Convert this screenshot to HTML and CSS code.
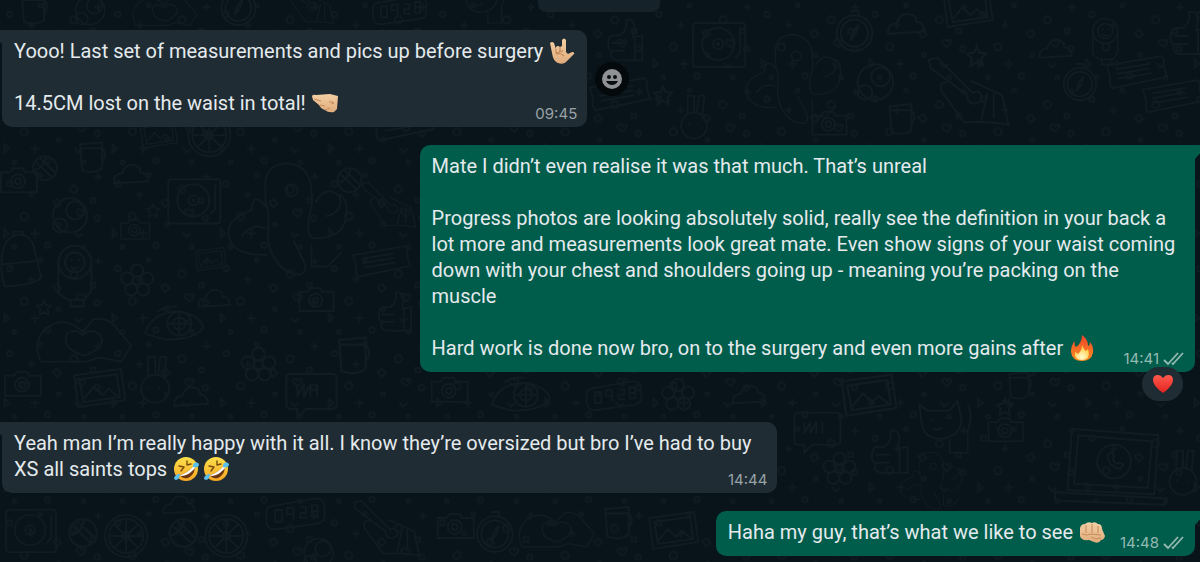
FILE: index.html
```html
<!DOCTYPE html>
<html lang="en">

<head>
    <meta charset="UTF-8">
    <meta name="viewport" content="width=device-width, initial-scale=1.0">
    <title>Chat</title>
    <link rel="stylesheet" href="styles.css">
</head>

<body>
    <!-- Shared drawings -->
    <svg class="defs" aria-hidden="true">
        <defs>
            <linearGradient id="skin" x1="0" y1="0" x2="0" y2="1">
                <stop offset="0" stop-color="#f3cfa4"/>
                <stop offset="1" stop-color="#e0ac7c"/>
            </linearGradient>
            <linearGradient id="flameFill" x1="0" y1="0" x2="0" y2="1">
                <stop offset="0" stop-color="#f0432a"/>
                <stop offset="1" stop-color="#fb8f22"/>
            </linearGradient>
            <radialGradient id="flameCore" cx="0.5" cy="0.8" r="0.7">
                <stop offset="0" stop-color="#fffbd0"/>
                <stop offset="1" stop-color="#ffc93a"/>
            </radialGradient>
            <linearGradient id="face" x1="0" y1="0" x2="0" y2="1">
                <stop offset="0" stop-color="#fde04c"/>
                <stop offset="1" stop-color="#f5a623"/>
            </linearGradient>
            <linearGradient id="heartFill" x1="0" y1="0" x2="0" y2="1">
                <stop offset="0" stop-color="#ff5a4d"/>
                <stop offset="1" stop-color="#e2231f"/>
            </linearGradient>
            <symbol id="rofl" viewBox="0 0 26 26">
                <circle cx="13" cy="13" r="12" fill="url(#face)"/>
                <path d="M6 10l5 1-3 4M14 5l0 4 4-1" fill="none" stroke="#7a4a10" stroke-width="1.4" stroke-linecap="round" stroke-linejoin="round"/>
                <path d="M7 19C12 18 18 14 21 9C23 14 20 20 15 22C11 23 8 21 7 19Z" fill="#6b3413"/>
                <path d="M7 19C12 18 18 14 21 9L22 12C18 17 13 20 8 20Z" fill="#fff"/>
                <path d="M1 23C1 20 4 18 7 18C7 21 5 24 3 24Z" fill="#5cc0ee"/>
                <path d="M20 9C21 6 24 6 26 8C26 11 23 12 20 11Z" fill="#5cc0ee"/>
            </symbol>
            <symbol id="ticks" viewBox="0 0 22 14">
                <path d="M1 8L5 12L15 1M9 11L10 12L20 1" fill="none" stroke="currentColor" stroke-width="1.8"/>
            </symbol>

            <!-- Wallpaper doodles -->
            <symbol id="star" viewBox="0 0 20 20"><path d="M10 2l2 5 6 1-4 4 1 6-5-3-5 3 1-6-4-4 6-1z"/></symbol>
            <symbol id="camera" viewBox="0 0 40 30"><path d="M2 7h9l3-4h10l2 4h12v20H2z"/><circle cx="19" cy="16" r="7"/><circle cx="19" cy="16" r="3"/></symbol>
            <symbol id="turntable" viewBox="0 0 60 50"><rect x="3" y="3" width="52" height="44" rx="3"/><circle cx="28" cy="24" r="16"/><circle cx="28" cy="24" r="5"/><circle cx="28" cy="24" r="1"/><path d="M50 8v24l-5 6"/></symbol>
            <symbol id="photo" viewBox="0 0 54 42"><path d="M3 8L48 2l4 30-45 7zM8 12l36-5 3 22-35 5z"/><path d="M12 31l10-12 8 8 6-6 10 8"/></symbol>
            <symbol id="lollipop" viewBox="0 0 40 60"><circle cx="18" cy="18" r="15"/><circle cx="18" cy="18" r="9"/><path d="M3 18v28l8 6h16l6-8V18M14 52v6h12v-7M15 15v2M22 15v2M14 22q4 3 8 0"/></symbol>
            <symbol id="cloud" viewBox="0 0 40 26"><path d="M3 22q-1-9 8-10q4-12 15-7q3 1 3 6q7 0 8 9z"/></symbol>
            <symbol id="flower" viewBox="0 0 36 36"><circle cx="18" cy="18" r="4"/><circle cx="18" cy="8" r="6"/><circle cx="28" cy="16" r="6"/><circle cx="24" cy="27" r="6"/><circle cx="12" cy="27" r="6"/><circle cx="8" cy="16" r="6"/></symbol>
            <symbol id="hands" viewBox="0 0 100 50"><path d="M8 46Q-2 26 14 12Q28 2 42 10L50 16L60 4Q76 0 86 16L98 30L88 46L66 42L54 46zM34 18Q28 34 52 40Q76 30 66 18Q56 12 50 20Q42 12 34 18z"/></symbol>
            <symbol id="ufo" viewBox="0 0 64 40"><path d="M2 30Q8 10 32 8Q56 10 60 24Q52 36 22 36z"/><circle cx="36" cy="20" r="12"/><circle cx="36" cy="20" r="6"/><path d="M36 8v24M24 20h24M14 8q8-6 20-5"/></symbol>
            <symbol id="elephant" viewBox="0 0 130 120"><path d="M44 28Q42 4 66 3Q90 6 90 32Q92 42 88 54Q84 76 92 78Q122 78 124 58Q128 40 118 34M44 28v14q4 8 3 22q-2 18 4 30q10 20 28 20q8-4 3-14l-10-20M44 46Q32 30 30 50Q2 60 8 78Q14 96 46 94M94 42q10-18 24-6q4 16-14 20M90 84v22h16l14-14M20 76q10-14 24-8"/><circle cx="70" cy="30" r="6"/></symbol>
            <symbol id="laptop" viewBox="0 0 110 76"><path d="M18 2L100 8L96 64L14 60zM24 8L94 14L90 58L20 54zM2 62L108 68L106 74L2 70z"/><circle cx="58" cy="33" r="16"/><path d="M52 26q0 12 12 14l3-4-4-2-2 1q-4-2-4-5l1-2-2-4z"/></symbol>
            <symbol id="ticket" viewBox="0 0 70 38"><path d="M2 12L60 2q4 4 2 10l4 12L8 36q-5-5-2-10zM12 16l36-6M12 21l36-6M14 26l36-6"/></symbol>
            <symbol id="clock" viewBox="0 0 40 44"><circle cx="20" cy="24" r="17"/><circle cx="20" cy="24" r="13"/><path d="M16 3h8v4M24 16l-3 9-5 6 3-9z"/></symbol>
            <symbol id="cat" viewBox="0 0 60 60"><path d="M4 8l8 6h22l8-10 4 20q-2 16-20 18Q8 42 6 26zM34 42v14h18V34q6-16 0-26M16 22v2M30 20v2M18 32q4 2 9-1"/></symbol>
            <symbol id="bubble" viewBox="0 0 50 44"><path d="M6 3h38q4 0 4 4v24q0 4-4 4H20l-8 8v-8H6q-4 0-4-4V7q0-4 4-4zM12 12v12l6-12v12l6-12v12M30 12v12"/></symbol>
            <symbol id="ball" viewBox="0 0 28 28"><circle cx="14" cy="14" r="12"/><path d="M5 8l16 15M9 4l16 15M3 16q10-2 12-14"/></symbol>
            <symbol id="burger" viewBox="0 0 46 40"><circle cx="22" cy="19" r="17"/><circle cx="27" cy="14" r="9"/><circle cx="12" cy="29" r="7"/></symbol>
            <symbol id="wheel" viewBox="0 0 46 46"><circle cx="23" cy="23" r="21"/><circle cx="23" cy="23" r="17"/><circle cx="23" cy="23" r="4"/><path d="M23 6v34M6 23h34M11 11l24 24M35 11L11 35"/></symbol>
            <symbol id="digital" viewBox="0 0 66 36"><path d="M8 10L54 2q8 0 9 8v12q-2 5-8 6L12 34q-8 0-9-8V16q1-5 5-6z"/><path d="M12 14h7v12h-7zM24 12h7v6h-7zM31 18v6M38 11h6v6h-6v5h7M50 9h6v12h-6zM50 15h6"/></symbol>
            <symbol id="guitar" viewBox="0 0 86 70"><path d="M4 4l8-2 34 34q6-4 8 2q2 6-6 8q-8 0-7-8L6 12zM22 26q-8-2-6 8l22 30q20-2 42 2L74 38 44 24M60 36l-6 26M66 36v24"/></symbol>
            <symbol id="bunny" viewBox="0 0 34 52"><circle cx="18" cy="36" r="14"/><path d="M11 24V4h7v18M21 22l2-18h6l-2 22M12 34v2M22 34v2"/></symbol>
            <symbol id="mug" viewBox="0 0 30 34"><path d="M3 4l22-2v26q-8 6-20 2zM25 8q6 6 0 14M4 8h20"/></symbol>
            <symbol id="bag" viewBox="0 0 46 60"><path d="M4 20Q8 4 22 4Q34 6 36 22l6 24q-2 8-36 10Q0 40 4 20zM2 34l40-4M14 6V1h10v4"/></symbol>
            <symbol id="thumb" viewBox="0 0 44 50"><path d="M4 24q0-6 6-6h6Q24 12 22 2q8-2 9 8l-2 10 10-2v26H12q-8-2-5-9q-5-4-3-11zM7 26h14M7 34h14M31 20v24"/></symbol>
            <pattern id="bits" width="120" height="94" patternUnits="userSpaceOnUse" patternTransform="scale(0.9)">
                <g fill="none" stroke="#0f1b21" stroke-width="2">
                    <circle cx="12" cy="16" r="3"/><circle cx="46" cy="6" r="2"/><circle cx="83" cy="22" r="4"/>
                    <circle cx="28" cy="52" r="4"/><circle cx="66" cy="61" r="2"/><circle cx="109" cy="54" r="3"/>
                    <circle cx="17" cy="86" r="2"/><circle cx="54" cy="84" r="3"/><circle cx="94" cy="86" r="2"/>
                    <path d="M60 36l5-3 4 5-5 4zM102 32h5v5h-5zM6 66l5 5-5 4zM84 70l4 5 5-4M92 46q-3-5-6 0q1 4 6 6q5-4 4-7q-2-2-4 1z"/>
                    <path d="M40 66v10M35 71h10M36 24v8M32 28h8M110 4v8M106 8h8"/>
                </g>
            </pattern>
        </defs>
    </svg>

    <main class="chat">
        <svg class="wallpaper" viewBox="0 0 1200 562" preserveAspectRatio="xMidYMid slice" aria-hidden="true">
            <rect width="1200" height="562" fill="url(#bits)"/>
            <g fill="none" stroke="#101c22" stroke-width="2">
                <use href="#bag" x="0" y="230" width="46" height="60"/>
                <use href="#camera" x="0" y="165" width="40" height="30"/>
                <use href="#ball" x="32" y="152" width="28" height="32"/>
                <use href="#mug" x="78" y="140" width="30" height="34"/>
                <use href="#cloud" x="112" y="160" width="40" height="28"/>
                <use href="#turntable" x="166" y="176" width="60" height="50"/>
                <use href="#burger" x="45" y="196" width="54" height="40"/>
                <use href="#lollipop" x="56" y="240" width="44" height="70"/>
                <use href="#flower" x="120" y="262" width="36" height="36"/>
                <use href="#elephant" x="222" y="160" width="130" height="120"/>
                <use href="#ball" x="336" y="166" width="28" height="28"/>
                <use href="#ufo" x="144" y="302" width="64" height="42"/>
                <use href="#hands" x="34" y="315" width="100" height="50"/>
                <use href="#photo" x="72" y="366" width="56" height="44"/>
                <use href="#bunny" x="138" y="352" width="34" height="52"/>
                <use href="#cloud" x="172" y="382" width="40" height="28"/>
                <use href="#flower" x="240" y="345" width="38" height="38"/>
                <use href="#camera" x="298" y="284" width="38" height="30"/>
                <use href="#mug" x="336" y="334" width="36" height="42"/>
                <use href="#bubble" x="282" y="370" width="60" height="48"/>
                <use href="#ticket" x="346" y="244" width="74" height="34"/>
                <use href="#photo" x="194" y="244" width="34" height="30"/>
                <use href="#camera" x="4" y="368" width="40" height="30"/>
                <use href="#guitar" x="360" y="180" width="60" height="50"/>
                <use href="#thumb" x="376" y="290" width="40" height="46"/>
                <use href="#star" x="146" y="202" width="16" height="16"/>
                <use href="#star" x="36" y="298" width="18" height="18"/>
                <use href="#camera" x="120" y="216" width="32" height="26"/>
                <use href="#cloud" x="196" y="286" width="38" height="24"/>
                <use href="#hands" x="130" y="-6" width="70" height="34"/>
                <use href="#clock" x="218" y="-16" width="42" height="44"/>
                <use href="#burger" x="70" y="-6" width="44" height="34"/>
                <use href="#mug" x="20" y="-8" width="30" height="34"/>
                <use href="#guitar" x="280" y="-20" width="60" height="46"/>
                <use href="#digital" x="370" y="-6" width="60" height="32"/>
                <use href="#cat" x="460" y="-20" width="50" height="46"/>
                <use href="#thumb" x="604" y="18" width="44" height="48"/>
                <use href="#ticket" x="588" y="76" width="66" height="36"/>
                <use href="#star" x="652" y="84" width="22" height="22"/>
                <use href="#turntable" x="690" y="20" width="60" height="50"/>
                <use href="#elephant" x="740" y="30" width="104" height="100"/>
                <use href="#clock" x="832" y="8" width="44" height="46"/>
                <use href="#burger" x="852" y="62" width="48" height="42"/>
                <use href="#cloud" x="884" y="10" width="44" height="28"/>
                <use href="#photo" x="940" y="-12" width="54" height="42"/>
                <use href="#camera" x="810" y="108" width="38" height="30"/>
                <use href="#mug" x="884" y="102" width="34" height="34"/>
                <use href="#guitar" x="924" y="50" width="90" height="84"/>
                <use href="#star" x="964" y="44" width="24" height="24"/>
                <use href="#cloud" x="1036" y="34" width="38" height="30"/>
                <use href="#clock" x="1060" y="60" width="38" height="44"/>
                <use href="#lollipop" x="1086" y="16" width="40" height="50"/>
                <use href="#ticket" x="1104" y="54" width="66" height="36"/>
                <use href="#ticket" x="1140" y="78" width="66" height="36"/>
                <use href="#thumb" x="1166" y="10" width="44" height="50"/>
                <use href="#ticket" x="370" y="106" width="70" height="36"/>
                <use href="#wheel" x="180" y="112" width="60" height="46"/>
                <use href="#photo" x="136" y="118" width="46" height="32"/>
                <use href="#bunny" x="676" y="92" width="34" height="48"/>
                <use href="#camera" x="430" y="374" width="40" height="30"/>
                <use href="#ufo" x="490" y="374" width="64" height="40"/>
                <use href="#digital" x="584" y="378" width="60" height="34"/>
                <use href="#flower" x="660" y="376" width="36" height="36"/>
                <use href="#cloud" x="730" y="380" width="38" height="28"/>
                <use href="#photo" x="838" y="370" width="60" height="50"/>
                <use href="#bubble" x="792" y="408" width="50" height="46"/>
                <use href="#cat" x="912" y="396" width="66" height="60"/>
                <use href="#camera" x="986" y="414" width="38" height="30"/>
                <use href="#mug" x="1004" y="370" width="30" height="30"/>
                <use href="#laptop" x="1050" y="426" width="120" height="80"/>
                <use href="#thumb" x="868" y="428" width="44" height="50"/>
                <use href="#elephant" x="890" y="450" width="80" height="62"/>
                <use href="#flower" x="820" y="450" width="38" height="36"/>
                <use href="#bunny" x="1164" y="446" width="34" height="50"/>
                <use href="#star" x="994" y="396" width="20" height="20"/>
                <use href="#wheel" x="104" y="512" width="46" height="46"/>
                <use href="#ball" x="68" y="516" width="32" height="32"/>
                <use href="#wheel" x="204" y="512" width="46" height="46"/>
                <use href="#ball" x="168" y="516" width="32" height="32"/>
                <use href="#digital" x="264" y="494" width="64" height="38"/>
                <use href="#cloud" x="160" y="492" width="40" height="24"/>
                <use href="#burger" x="300" y="536" width="40" height="34"/>
                <use href="#turntable" x="4" y="506" width="58" height="48"/>
                <use href="#guitar" x="350" y="498" width="76" height="60"/>
                <use href="#camera" x="436" y="510" width="40" height="30"/>
                <use href="#clock" x="474" y="508" width="42" height="46"/>
                <use href="#hands" x="516" y="506" width="80" height="46"/>
                <use href="#mug" x="602" y="504" width="32" height="36"/>
                <use href="#photo" x="646" y="508" width="54" height="44"/>
            </g>
        </svg>

        <div class="date-chip"></div>

        <div class="row incoming">
            <div class="bubble">
                <p>Yooo! Last set of measurements and pics up before surgery <svg class="emoji" viewBox="0 0 26 26" role="img" aria-label="Love-you gesture"><path d="M1 5Q3 3 5 5L7 11V9Q9 7 11 9L13 8V2Q15-1 17 2V14L19 16L23 14Q26 14 25 16L17 24Q14 27 9 25Q4 23 3 15Z" fill="url(#skin)"/><path d="M7 11V15Q9 16 11 13V9M11 13Q13 15 14 12M7 16Q12 14 15 18" fill="none" stroke="#b97c4e" stroke-width="1"/></svg></p>
                <p>14.5CM lost on the waist in total! <svg class="emoji" viewBox="0 0 26 26" role="img" aria-label="Left-facing fist"><path d="M0 6Q1 4 4 5L18 4Q22 5 26 6L25 19L22 22Q16 23 13 20Q9 19 7 15L1 10Z" fill="url(#skin)"/><path d="M2 9L9 11M8 15L13 16M13 20L18 18M17 12Q20 11 22 13L19 14" fill="none" stroke="#c48a58" stroke-width="1"/></svg></p>
                <time class="meta">09:45</time>
            </div>
            <button class="react" type="button" aria-label="React">
                <svg viewBox="0 0 20 20"><circle cx="10" cy="10" r="10" fill="#8f9192"/><circle cx="7" cy="8" r="2" fill="#0a0e10"/><circle cx="13" cy="8" r="2" fill="#0a0e10"/><path d="M4 12H16Q14 16 10 16Q6 16 4 12Z" fill="#0a0e10"/></svg>
            </button>
        </div>

        <div class="row outgoing reacted">
            <div class="bubble">
                <p>Mate I didn’t even realise it was that much. That’s unreal</p>
                <p>Progress photos are looking absolutely solid, really see the definition in your back a lot more and measurements look great mate. Even show signs of your waist coming down with your chest and shoulders going up - meaning you’re packing on the muscle</p>
                <p>Hard work is done now bro, on to the surgery and even more gains after <svg class="emoji" viewBox="0 0 26 26" role="img" aria-label="Fire"><path d="M13 0Q19 4 19 11Q21 10 21 7Q25 12 24 18Q22 26 13 26Q3 26 2 17Q2 10 6 6Q5 10 7 12Q13 8 13 0Z" fill="url(#flameFill)"/><path d="M13 10Q15 15 17 16L19 14Q22 25 13 25Q5 25 6 17L9 19Q13 16 13 10Z" fill="url(#flameCore)"/></svg></p>
                <span class="meta"><time>14:41</time><svg class="ticks" role="img" aria-label="Delivered"><use href="#ticks"/></svg></span>
                <button class="reaction" type="button" aria-label="Heart reaction">
                    <svg viewBox="0 0 20 20"><path d="M10 19Q0 12 0 6Q0 1 5 1Q8 1 10 4Q12 1 15 1Q20 1 20 6Q20 12 10 19Z" fill="url(#heartFill)"/></svg>
                </button>
            </div>
        </div>

        <div class="row incoming">
            <div class="bubble">
                <p>Yeah man I’m really happy with it all. I know they’re oversized but bro I’ve had to buy XS all saints tops <svg class="emoji" role="img" aria-label="Rolling on the floor laughing"><use href="#rofl"/></svg><svg class="emoji" role="img" aria-label="Rolling on the floor laughing"><use href="#rofl"/></svg></p>
                <time class="meta">14:44</time>
            </div>
        </div>

        <div class="row outgoing">
            <div class="bubble short">
                <p>Haha my guy, that’s what we like to see <svg class="emoji" viewBox="0 0 26 26" role="img" aria-label="Oncoming fist"><path d="M1 9Q2 5 6 5Q9 2 13 4Q16 2 19 5Q23 5 23 10L26 17Q25 21 22 21Q20 25 15 23L10 21Q2 22 1 17Z" fill="url(#skin)"/><path d="M7 6V14M13 5V14M19 7V14M3 15Q8 17 12 15L22 16M12 18Q16 21 22 19" fill="none" stroke="#c48a58" stroke-width="1"/></svg></p>
                <span class="meta"><time>14:48</time><svg class="ticks" role="img" aria-label="Delivered"><use href="#ticks"/></svg></span>
            </div>
        </div>
    </main>
</body>

</html>
```
FILE: styles.css
```css
* {
    box-sizing: border-box;
}

body {
    margin: 0;
    background-color: #08131a;
    color: #e4eaed;
    font-family: Roboto, "Liberation Sans", sans-serif;
    font-size: 20px;
    line-height: 26px;
}

button {
    border: 0;
    padding: 0;
    cursor: pointer;
}

.defs {
    position: absolute;
    width: 0;
    height: 0;
}

.chat {
    position: relative;
    min-height: 100vh;
    overflow: hidden;
    display: flex;
    flex-direction: column;
    gap: 18px;
    padding: 0 5px 7px 2px;
}

/* Doodles behind the messages */
.wallpaper {
    position: absolute;
    top: 0;
    left: 0;
    width: 100%;
    height: 100%;
}

.date-chip {
    position: relative;
    align-self: center;
    width: 122px;
    height: 12px;
    border-radius: 0 0 8px 8px;
    background-color: #16222a;
}

.row {
    position: relative;
    display: flex;
    align-items: center;
    gap: 8px;
}

.outgoing {
    justify-content: flex-end;
}

.reacted {
    margin-bottom: 32px;
}

.bubble {
    position: relative;
    max-width: 65%;
    padding: 8px 12px 11px;
    border-radius: 10px;
    background-color: #202c33;
}

.incoming .bubble {
    border-top-left-radius: 0;
}

.outgoing .bubble {
    border-top-right-radius: 0;
    background-color: #005c4b;
}

/* Tail at the top corner */
.bubble::before {
    content: "";
    position: absolute;
    top: 0;
    width: 12px;
    height: 14px;
    background-color: inherit;
}

.incoming .bubble::before {
    right: 100%;
    clip-path: polygon(0 0, 100% 0, 100% 100%);
}

.outgoing .bubble::before {
    left: 100%;
    clip-path: polygon(0 0, 100% 0, 0 100%);
}

.bubble p {
    margin: 0;
}

.bubble p + p {
    margin-top: 26px;
}

.emoji {
    width: 26px;
    height: 26px;
    margin-left: 1px;
    vertical-align: bottom;
}

.emoji + .emoji {
    margin-left: 4px;
}

.meta {
    position: absolute;
    right: 10px;
    bottom: 3px;
    display: flex;
    align-items: center;
    gap: 4px;
    color: #98a3a8;
    font-family: Inter, "Liberation Sans", sans-serif;
    font-size: 15px;
    line-height: 20px;
}

.outgoing .meta {
    color: #94bab2;
}

.short {
    padding-right: 90px;
}

.ticks {
    width: 22px;
    height: 14px;
}

.react {
    display: flex;
    align-items: center;
    justify-content: center;
    width: 34px;
    height: 34px;
    border-radius: 50%;
    background-color: #04090c;
}

.react svg {
    width: 20px;
    height: 20px;
}

.reaction {
    position: absolute;
    right: 12px;
    bottom: -29px;
    display: flex;
    align-items: center;
    justify-content: center;
    width: 41px;
    height: 34px;
    border-radius: 17px;
    background-color: #202c33;
}

.reaction svg {
    width: 20px;
    height: 20px;
}
```
